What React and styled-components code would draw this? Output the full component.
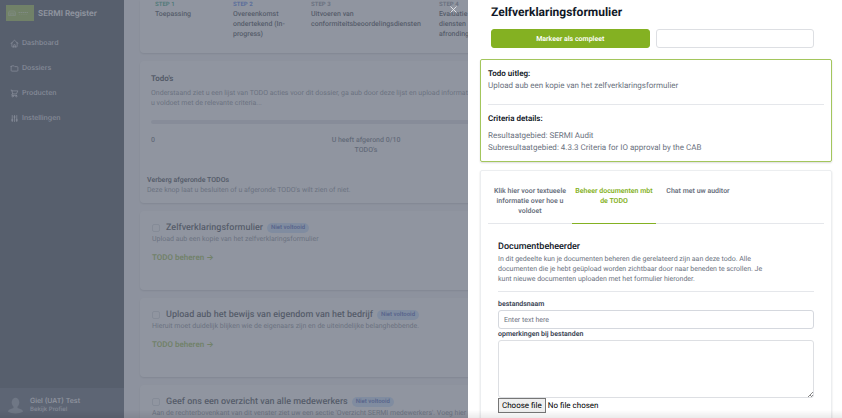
import React from "react";
import styled, { createGlobalStyle } from "styled-components";
import {
  HiOutlineHome,
  HiOutlineFolder,
  HiOutlineShoppingCart,
  HiOutlineAdjustments,
  HiOutlineX,
} from "react-icons/hi";

const green = "#84b122";

const GlobalStyle = createGlobalStyle`
  *, *::before, *::after { box-sizing: border-box; }
  body { margin: 0; }
  body, button, input, textarea {
    font-family: Roboto, Inter, "Liberation Sans", sans-serif;
    text-rendering: geometricPrecision;
  }
  body { font-size: 7px; line-height: 10px; color: #111827; }
  h1, h2, h3, p { margin: 0; }
  a { text-decoration: none; color: inherit; }
`;

const Page = styled.div`
  display: flex;
  height: 100vh;
  overflow: hidden;
  background: #f3f4f6;
`;

const Sidebar = styled.aside`
  display: flex;
  flex-direction: column;
  flex: none;
  width: 124px;
  background: #1f2937;
  color: #fff;
  font-family: Inter, "Liberation Sans", sans-serif;
`;

const Brand = styled.div`
  display: flex;
  align-items: center;
  gap: 4px;
  padding: 5px 6px;
  font-size: 8px;
  line-height: 16px;
  font-weight: 600;
`;

const Nav = styled.nav`
  display: flex;
  flex: 1;
  flex-direction: column;
  gap: 5px;
  padding: 7px 6px;
`;

const NavLink = styled.a`
  display: flex;
  align-items: center;
  gap: 3px;
  padding: 5px 4px;
  color: #d1d5db;
  font-weight: 500;
  svg { width: 9px; height: 9px; }
`;

const Profile = styled.a`
  display: flex;
  align-items: center;
  gap: 7px;
  padding: 8px 8px 4px;
  background: #374151;
  font-weight: 500;
`;

const ProfileHint = styled.div`
  font-size: 6px;
  line-height: 8px;
  color: #d1d5db;
`;

const Main = styled.main`
  display: flex;
  flex: 1;
  flex-direction: column;
  gap: 8px;
  min-width: 0;
  padding: 0 16px;
`;

const Panel = styled.section`
  flex: none;
  background: #fff;
  border-radius: ${(p) => (p.$flatTop ? "0 0 4px 4px" : "4px")};
  box-shadow: 0 1px 2px rgba(0, 0, 0, 0.2);
`;

const Steps = styled.ol`
  display: grid;
  grid-template-columns: 70px 70px 120px 1fr;
  gap: 8px;
  margin: 0;
  padding: 0 15px 14px;
  list-style: none;
  font-weight: 500;
`;

const StepLabel = styled.div`
  font-size: 6px;
  line-height: 9px;
  font-weight: 700;
  color: ${(p) => p.$color};
`;

const StepText = styled.div`
  padding-right: 8px;
`;

const TodoIntro = styled.div`
  display: flex;
  flex-direction: column;
  padding: 12px 11px;
  color: #6b7280;
`;

const TodoHeading = styled.h2`
  margin-bottom: 3px;
  font-size: 8px;
  line-height: 12px;
  font-weight: 700;
  color: #111827;
`;

const Track = styled.div`
  height: 4px;
  margin: 12px 0 11px;
  border-radius: 2px;
  background: #d9dce2;
`;

const Progress = styled.div`
  display: grid;
  grid-template-columns: 173px 84px 1fr;
  color: #4b5563;
  font-weight: 500;
`;

const Centered = styled.div`
  text-align: center;
`;

const HideDone = styled.div`
  padding: 8px 7px;
  color: #6b7280;
`;

const Strong = styled.div`
  font-weight: 600;
  color: #111827;
`;

const Item = styled.div`
  padding: 11px 12px 26px;
  color: #6b7280;
`;

const ItemHead = styled.div`
  display: flex;
  align-items: center;
`;

const Check = styled.input`
  appearance: none;
  width: 8px;
  height: 8px;
  margin: 0 6px 0 0;
  border: 1px solid #d1d5db;
  border-radius: 2px;
  background: #fff;
`;

const ItemTitle = styled.label`
  margin-right: 4px;
  font-size: 9px;
  line-height: 12px;
  font-weight: 500;
  color: #111827;
`;

const Badge = styled.span`
  padding: 0 4px;
  border-radius: 5px;
  background: #bfdbfe;
  color: #1e40af;
  font-size: 6px;
  line-height: 10px;
  font-weight: 600;
`;

const ManageLink = styled.a`
  display: block;
  width: fit-content;
  margin-top: 8px;
  font-size: 8px;
  line-height: 12px;
  font-weight: 600;
  color: ${green};
`;

const Overlay = styled.div`
  position: fixed;
  inset: 0;
  display: flex;
  justify-content: flex-end;
  align-items: flex-start;
  background: rgba(107, 114, 128, 0.75);
`;

const Close = styled.button`
  display: flex;
  flex: none;
  margin: 4px 9px 0 0;
  padding: 0;
  border: 0;
  background: none;
  color: #e5e7eb;
  svg { width: 11px; height: 11px; }
`;

const Drawer = styled.div`
  width: 374px;
  height: 100vh;
  overflow: hidden;
  background: #fff;
`;

const DrawerHead = styled.header`
  padding: 4px 28px 11px 23px;
`;

const DrawerTitle = styled.h1`
  font-size: 12px;
  line-height: 16px;
  font-weight: 700;
`;

const Actions = styled.div`
  display: grid;
  grid-template-columns: 1fr 1fr;
  gap: 6px;
  margin-top: 9px;
`;

const Action = styled.button`
  height: 19px;
  padding: 0;
  border: 1px solid ${(p) => (p.$primary ? green : "#dddfe3")};
  border-radius: 3px;
  background: ${(p) => (p.$primary ? green : "#fff")};
  color: #fff;
  font-size: 7px;
  line-height: 10px;
  font-weight: 600;
`;

const Card = styled.section`
  margin: 0 10px 8px 12px;
  padding: 8px 7px 7px;
  border: 1px solid ${(p) => (p.$accent ? "#a3c65c" : "#eceef0")};
  border-radius: 2px;
  box-shadow: 0 1px 2px rgba(0, 0, 0, 0.14);
`;

const Details = styled.div`
  font-size: 8px;
  line-height: 12px;
  color: #6b7280;
  & + & {
    margin-top: 12px;
    padding-top: 8px;
    border-top: 1px solid #e5e7eb;
  }
`;

const DetailsTitle = styled.h2`
  margin-bottom: ${(p) => (p.$spaced ? "5px" : "0")};
  font-size: 8px;
  line-height: 12px;
  font-weight: 600;
  color: #111827;
`;

const Tabs = styled.div`
  display: grid;
  grid-template-columns: repeat(4, 1fr);
  margin-top: 4px;
  border-bottom: 1px solid #e5e7eb;
`;

const Tab = styled.button`
  display: flex;
  justify-content: center;
  margin-bottom: -1px;
  padding: 3px 1px 7px;
  border: 0;
  border-bottom: 1px solid ${(p) => (p.$active ? green : "transparent")};
  background: none;
  color: ${(p) => (p.$active ? green : "#6b7280")};
  font-size: 7px;
  line-height: 10px;
  font-weight: 600;
`;

const Form = styled.form`
  display: flex;
  flex-direction: column;
  padding: 17px 10px 0;
`;

const FormTitle = styled.h2`
  font-size: 9px;
  line-height: 13px;
  font-weight: 500;
`;

const FormIntro = styled.p`
  max-width: 272px;
  color: #6b7280;
`;

const Rule = styled.hr`
  width: 100%;
  margin: 7px 0;
  border: 0;
  border-top: 1px solid #e5e7eb;
`;

const Label = styled.label`
  font-weight: 600;
  color: #374151;
`;

const TextInput = styled.input`
  height: 19px;
  margin-top: 1px;
  padding: 0 5px;
  border: 1px solid #d5d8de;
  border-radius: 3px;
  font-size: 7px;
  line-height: 10px;
  &::placeholder { color: #6b7280; }
`;

const TextArea = styled.textarea`
  height: 58px;
  margin-top: 1px;
  border: 1px solid #dddfe3;
  border-radius: 3px;
  resize: vertical;
  &::-webkit-resizer {
    background: linear-gradient(135deg, transparent 45%, #888 45% 60%, transparent 60% 75%, #888 75% 90%, transparent 90%)
      no-repeat right bottom / 5px 5px;
  }
`;

const FileField = styled.label`
  display: flex;
  align-items: center;
  gap: 2px;
  font-size: 8px;
  line-height: 13px;
  color: #000;
`;

const HiddenFile = styled.input`
  position: absolute;
  width: 1px;
  height: 1px;
  opacity: 0;
`;

const FileButton = styled.span`
  padding: 0 3px;
  border: 1px solid #767676;
  background: #efefef;
`;

const BottomShade = styled.div`
  position: fixed;
  inset: auto 0 0 0;
  height: 8px;
  background: linear-gradient(to bottom, rgba(0, 0, 0, 0), rgba(0, 0, 0, 0.08));
  pointer-events: none;
`;

const Logo = () => (
  <svg width="28" height="16" viewBox="0 0 28 16" aria-hidden="true">
    <rect width="28" height="16" fill={green} />
    <g fill="none" stroke="#d9e6b8" strokeWidth="0.7" opacity="0.7">
      <path d="M2.5 10.5V7.5l1-1.5h5l1 1.5v3zM2.5 8h7M4 10.5V9h4v1.5" />
      <path d="M12.5 7.5h10" strokeDasharray="1.5 0.5" strokeWidth="1.1" />
      <path d="M13 9.5h9" strokeDasharray="1 0.8" strokeWidth="0.4" />
    </g>
  </svg>
);

const Avatar = () => (
  <svg width="15" height="17" viewBox="0 0 15 17" fill="#7c8794" aria-hidden="true">
    <ellipse cx="7.5" cy="5.5" rx="3.8" ry="4.7" />
    <path d="M5.5 9h4v2l4 1.6q1.5.9 1.5 2.2-3 1.7-7.5 1.7T0 14.8q0-1.3 1.5-2.2l4-1.6z" />
  </svg>
);

const navigation = [
  ["Dashboard", HiOutlineHome],
  ["Dossiers", HiOutlineFolder],
  ["Producten", HiOutlineShoppingCart],
  ["Instellingen", HiOutlineAdjustments],
];

const steps = [
  ["STEP 1", "Toepassing", "#059669"],
  ["STEP 2", "Overeenkomst ondertekend (In-progress)", "#2563eb"],
  ["STEP 3", "Uitvoeren van conformiteitsbeoordelingsdiensten", "#6b7280"],
];

const todos = [
  {
    title: "Zelfverklaringsformulier",
    text: "Upload aub een kopie van het zelfverklaringsformulier",
    manageable: true,
  },
  {
    title: "Upload aub het bewijs van eigendom van het bedrijf",
    text: "Hieruit moet duidelijk blijken wie de eigenaars zijn en de uiteindelijke belanghebbende.",
    manageable: true,
  },
  {
    title: "Geef ons een overzicht van alle medewerkers",
    text: "Aan de rechterbovenkant van dit venster ziet uw een sectie 'Overzicht SERMI medewerkers'. Voeg hier",
    manageable: false,
  },
];

export default function App() {
  return (
    <>
      <GlobalStyle />
      <Page>
        <Sidebar>
          <Brand>
            <Logo />
            SERMI Register
          </Brand>
          <Nav>
            {navigation.map(([name, Icon]) => (
              <NavLink href="#" key={name}>
                <Icon />
                {name}
              </NavLink>
            ))}
          </Nav>
          <Profile href="#">
            <Avatar />
            <div>
              Giel (UAT) Test
              <ProfileHint>Bekijk Profiel</ProfileHint>
            </div>
          </Profile>
        </Sidebar>
        <Main>
          <Panel $flatTop>
            <Steps>
              {steps.map(([label, text, color]) => (
                <li key={label}>
                  <StepLabel $color={color}>{label}</StepLabel>
                  <StepText>{text}</StepText>
                </li>
              ))}
              <li>
                <StepLabel $color="#6b7280">STEP 4</StepLabel>
                <StepText>
                  Evaluatie
                  <br />
                  diensten
                  <br />
                  afronding
                </StepText>
              </li>
            </Steps>
          </Panel>
          <Panel>
            <TodoIntro>
              <TodoHeading>Todo's</TodoHeading>
              <p>
                Onderstaand ziet u een lijst van TODO acties voor dit dossier, ga aub door deze lijst en upload informatie
                <br />u voldoet met de relevante criteria...
              </p>
              <Track />
              <Progress>
                <div>0</div>
                <Centered>U heeft afgerond 0/10 TODO's</Centered>
              </Progress>
            </TodoIntro>
            <HideDone>
              <Strong>Verberg afgeronde TODOs</Strong>
              Deze knop laat u besluiten of u afgeronde TODO's wilt zien of niet.
            </HideDone>
          </Panel>
          {todos.map(({ title, text, manageable }, i) => (
            <Panel key={title}>
              <Item>
                <ItemHead>
                  <Check type="checkbox" id={`todo-${i}`} />
                  <ItemTitle htmlFor={`todo-${i}`}>{title}</ItemTitle>
                  <Badge>Niet voltooid</Badge>
                </ItemHead>
                <p>{text}</p>
                {manageable && <ManageLink href="#">TODO beheren →</ManageLink>}
              </Item>
            </Panel>
          ))}
        </Main>
      </Page>
      <Overlay>
        <Close type="button" aria-label="Sluiten">
          <HiOutlineX />
        </Close>
        <Drawer role="dialog" aria-labelledby="drawer-title">
          <DrawerHead>
            <DrawerTitle id="drawer-title">Zelfverklaringsformulier</DrawerTitle>
            <Actions>
              <Action type="button" $primary>
                Markeer als compleet
              </Action>
              <Action type="button" />
            </Actions>
          </DrawerHead>
          <Card $accent>
            <Details>
              <DetailsTitle>Todo uitleg:</DetailsTitle>
              Upload aub een kopie van het zelfverklaringsformulier
            </Details>
            <Details>
              <DetailsTitle $spaced>Criteria details:</DetailsTitle>
              <p>Resultaatgebied: SERMI Audit</p>
              <p>Subresultaatgebied: 4.3.3 Criteria for IO approval by the CAB</p>
            </Details>
          </Card>
          <Card>
            <Tabs role="tablist">
              <Tab type="button" role="tab">
                Klik hier voor textueele informatie over hoe u voldoet
              </Tab>
              <Tab type="button" role="tab" aria-selected="true" $active>
                Beheer documenten mbt de TODO
              </Tab>
              <Tab type="button" role="tab">
                Chat met uw auditor
              </Tab>
            </Tabs>
            <Form>
              <FormTitle>Documentbeheerder</FormTitle>
              <FormIntro>
                In dit gedeelte kun je documenten beheren die gerelateerd zijn aan deze todo. Alle documenten die je
                hebt geüpload worden zichtbaar door naar beneden te scrollen. Je kunt nieuwe documenten uploaden met
                het formulier hieronder.
              </FormIntro>
              <Rule />
              <Label htmlFor="file-name">bestandsnaam</Label>
              <TextInput id="file-name" placeholder="Enter text here" />
              <Label htmlFor="file-notes">opmerkingen bij bestanden</Label>
              <TextArea id="file-notes" />
              <FileField>
                <HiddenFile type="file" />
                <FileButton>Choose file</FileButton>
                No file chosen
              </FileField>
            </Form>
          </Card>
        </Drawer>
      </Overlay>
      <BottomShade />
    </>
  );
}
